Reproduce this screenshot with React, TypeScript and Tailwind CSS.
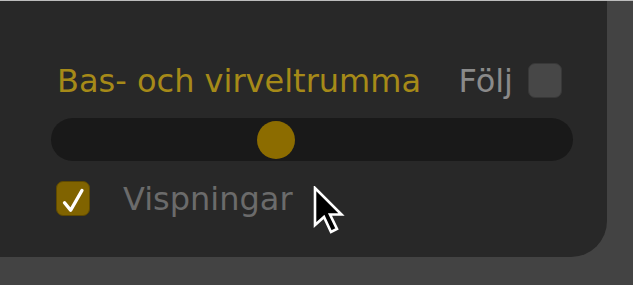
export default function App() {
  const font = { fontFamily: '"DejaVu Sans", "Liberation Sans", sans-serif' };

  return (
    <div className="w-[633px] h-[285px] bg-[#434343] overflow-hidden" style={font}>
      <div className="h-px w-full bg-[#bdbdbd]" />
      <div className="relative w-[607px] h-[256px] bg-[#282828] rounded-br-[36px] pl-[51px] pt-[62px]">
        {/* Title row */}
        <div className="flex items-center justify-between w-[511px] h-[35px] pl-[6px]">
          <span className="text-[32px] leading-[32px] text-[#a68a18]">Bas- och virveltrumma</span>
          <div className="flex items-center gap-[15px]">
            <span className="text-[32px] leading-[32px] text-[#8a8a8a]">Följ</span>
            <div className="w-[34px] h-[35px] rounded-[7px] bg-[#474747] border border-[#383838]" />
          </div>
        </div>

        {/* Slider */}
        <div className="mt-[20px] w-[522px] h-[43px] rounded-full bg-[#191919] flex items-center pl-[206px]">
          <div className="w-[38px] h-[38px] rounded-full bg-[#8c6c00]" />
        </div>

        {/* Checkbox row */}
        <div className="mt-[20px] flex items-center pl-[5px] gap-[33px]">
          <div className="w-[34px] h-[35px] rounded-[7px] bg-[#806300] border border-[#5e4900] flex items-center justify-center">
            <svg width="34" height="35" viewBox="0 0 34 35" fill="none">
              <path d="M8 22 L14.5 30 L26.5 9" stroke="#ffffff" strokeWidth="3.6" strokeLinecap="round" strokeLinejoin="round" />
            </svg>
          </div>
          <span className="text-[32px] leading-[32px] text-[#6b6b6b]">Vispningar</span>
        </div>

        {/* Mouse pointer */}
        <svg className="absolute left-[313px] top-[185px]" width="32" height="50" viewBox="-2 -2 32 50">
          <path
            d="M0 0 L0 37 L9 29 L16 44 L22 41 L15 26.5 L26.5 26.5 Z"
            fill="#000000"
            stroke="#ffffff"
            strokeWidth="2.6"
            strokeLinejoin="miter"
          />
        </svg>
      </div>
    </div>
  );
}
